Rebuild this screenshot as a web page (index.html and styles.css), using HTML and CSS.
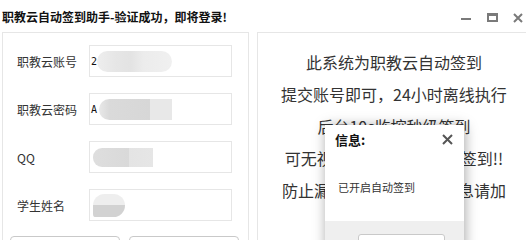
FILE: index.html
```html
<!DOCTYPE html>
<html lang="zh-CN">
<head>
<meta charset="utf-8">
<title>职教云自动签到助手</title>
<link rel="stylesheet" href="styles.css">
</head>
<body>
<div class="window">
  <div class="titlebar">
    <span class="title">职教云自动签到助手-验证成功，即将登录!</span>
    <div class="controls">
      <span class="ctl-min"></span>
      <span class="ctl-max"></span>
      <svg class="ctl-close" width="10" height="10" viewBox="0 0 10 10"><path d="M1 1L9 9M9 1L1 9" stroke="#7a7a7a" stroke-width="2" fill="none"/></svg>
    </div>
  </div>
  <div class="main">
    <div class="panel left">
      <div class="form">
        <div class="row"><label>职教云账号</label><div class="input"><span class="val">2</span><span class="blob b1"></span></div></div>
        <div class="row"><label>职教云密码</label><div class="input"><span class="val">A</span><span class="blob b2"></span></div></div>
        <div class="row"><label>QQ</label><div class="input"><span class="blob b3"></span></div></div>
        <div class="row"><label>学生姓名</label><div class="input"><span class="blob b4"></span></div></div>
      </div>
      <div class="buttons">
        <button class="btn" aria-label="提交"></button>
        <button class="btn" aria-label="重置"></button>
      </div>
    </div>
    <div class="panel right">
      <p>此系统为职教云自动签到</p>
      <p>提交账号即可，24小时离线执行</p>
      <p>后台10s监控秒级签到</p>
      <p>可无视手势码数字码定位签到!!</p>
      <p>防止漏签如需了解更多信息请加</p>
    </div>
  </div>
  <div class="dialog">
    <div class="dlg-head">
      <span class="dlg-title">信息:</span>
      <svg class="dlg-close" width="11" height="11" viewBox="0 0 11 11"><path d="M1 1L10 10M10 1L1 10" stroke="#555" stroke-width="2" fill="none"/></svg>
    </div>
    <div class="dlg-body">已开启自动签到</div>
    <div class="dlg-foot"><button class="dlg-btn" aria-label="确定"></button></div>
  </div>
</div>
</body>
</html>
```
FILE: styles.css
```css
html, body {
  margin: 0;
  padding: 0;
  background: #fff;
}
body {
  width: 526px;
  height: 240px;
  overflow: hidden;
  font-family: "Noto Sans CJK SC", "Liberation Sans", sans-serif;
  color: #333;
}
.window {
  position: relative;
  width: 526px;
  height: 240px;
  overflow: hidden;
}
.titlebar {
  height: 32px;
  display: flex;
  align-items: center;
  justify-content: space-between;
  padding-left: 2px;
  padding-right: 3px;
}
.title {
  font-size: 12px;
  font-weight: bold;
  color: #111;
  margin-top: 1px;
}
.controls {
  display: flex;
  align-items: center;
  gap: 15px;
  margin-top: 3px;
}
.ctl-min {
  display: block;
  width: 10px;
  height: 2px;
  background: #7a7a7a;
  margin-top: 3px;
}
.ctl-max {
  display: block;
  width: 7px;
  height: 4px;
  border: 2px solid #7a7a7a;
  border-top-width: 3px;
  margin-left: 1px;
}
.ctl-close { display: block; }
.main {
  display: flex;
  gap: 8px;
  padding-left: 2px;
}
.panel {
  border: 1px solid #e6e6e6;
  height: 260px;
  box-sizing: border-box;
}
.left {
  width: 247px;
  flex: none;
}
.right {
  width: 274px;
  flex: none;
  padding-top: 13px;
  text-align: center;
}
.right p {
  margin: 0;
  font-size: 16px;
  line-height: 32px;
  color: #333;
  white-space: nowrap;
}
.form {
  display: flex;
  flex-direction: column;
  gap: 16px;
  padding: 12px 0 0 14px;
}
.row {
  display: flex;
  align-items: center;
  height: 32px;
}
.row label {
  width: 72px;
  font-size: 12px;
  color: #333;
}
.input {
  width: 143px;
  height: 32px;
  box-sizing: border-box;
  border: 1px solid #e6e6e6;
  display: flex;
  align-items: center;
  padding-left: 1px;
}
.val {
  font-family: "DejaVu Sans Mono", monospace;
  font-size: 10px;
  color: #111;
  width: 6px;
}
.blob {
  display: block;
  height: 21px;
}
.b1 {
  width: 75px;
  border-radius: 11px;
  background: linear-gradient(90deg, #eeeeee 0%, #e6e6e6 25%, #e3e3e3 45%, #ececec 62%, #f0f0f0 100%);
  filter: blur(0.6px);
}
.b2 {
  width: 73px;
  border-radius: 11px 0 0 11px;
  margin-left: 2px;
  background: linear-gradient(90deg, #e8e8e8 0%, #dadada 14%, #d7d7d7 70%, #e8e8e8 70%, #e8e8e8 100%);
  filter: blur(0.4px);
}
.b3 {
  width: 60px;
  height: 19px;
  margin-left: 2px;
  border-radius: 9px 0 0 9px;
  background: linear-gradient(90deg, #dedede 0%, #d9d9d9 60%, #e4e4e4 60%, #e6e6e6 100%);
  filter: blur(0.4px);
}
.b4 {
  width: 32px;
  height: 23px;
  margin-left: 2px;
  border-radius: 12px 12px 12px 3px;
  background: linear-gradient(180deg, #eeeeee 0%, #eeeeee 50%, #d2d2d2 50%, #d2d2d2 100%);
  filter: blur(0.4px);
}
.buttons {
  display: flex;
  gap: 9px;
  padding: 15px 0 0 7px;
}
.btn {
  width: 110px;
  height: 32px;
  border: 1px solid #c9c9c9;
  border-radius: 4px;
  background: #fff;
}
.dialog {
  position: absolute;
  left: 325px;
  top: 125px;
  width: 139px;
  height: 140px;
  background: #fff;
  box-shadow: 1px 1px 12px rgba(0,0,0,0.35);
  display: flex;
  flex-direction: column;
}
.dlg-head {
  height: 30px;
  display: flex;
  align-items: center;
  justify-content: space-between;
  padding: 0 11px 0 10px;
}
.dlg-title {
  font-size: 13px;
  font-weight: bold;
  color: #111;
}
.dlg-body {
  height: 68px;
  display: flex;
  align-items: center;
  padding-left: 13px;
  padding-bottom: 2px;
  box-sizing: border-box;
  font-size: 11px;
  color: #333;
}
.dlg-foot {
  flex: 1;
  background: #efefef;
  padding: 13px 0 0 33px;
}
.dlg-btn {
  width: 87px;
  height: 28px;
  border: 1px solid #c9c9c9;
  border-radius: 3px;
  background: #fff;
}
```
